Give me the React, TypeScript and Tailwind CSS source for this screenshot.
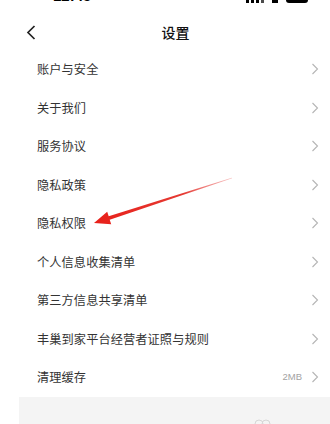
import React from "react";

const rows: { label: string; extra?: string }[] = [
  { label: "账户与安全" },
  { label: "关于我们" },
  { label: "服务协议" },
  { label: "隐私政策" },
  { label: "隐私权限" },
  { label: "个人信息收集清单" },
  { label: "第三方信息共享清单" },
  { label: "丰巢到家平台经营者证照与规则" },
  { label: "清理缓存", extra: "2MB" },
];

function Chevron() {
  return (
    <svg width="8" height="12" viewBox="0 0 8 12" fill="none">
      <path d="M1.5 1L6.5 6L1.5 11" stroke="#b5b5b5" strokeWidth="1.1" />
    </svg>
  );
}

function Arrow() {
  return (
    <svg className="pointer-events-none absolute left-0 top-0" width="330" height="424">
      <defs>
        <linearGradient id="ar" x1="232" y1="178" x2="94" y2="223" gradientUnits="userSpaceOnUse">
          <stop offset="0" stopColor="#f08080" stopOpacity="0.5" />
          <stop offset="0.35" stopColor="#e53a33" />
          <stop offset="1" stopColor="#e8201a" />
        </linearGradient>
      </defs>
      <polygon
        points="94,223 107.2,211.8 108.7,216.3 231.8,177.7 232.2,178.3 109.7,219.7 111.2,224.2"
        fill="url(#ar)"
      />
    </svg>
  );
}

export default function App() {
  return (
    <div
      className="relative h-[424px] w-[330px] overflow-hidden bg-white text-[#333]"
      style={{ fontFamily: '"Noto Sans CJK SC", "Noto Sans", sans-serif' }}
    >
      {/* status bar, cut off at the top of the shot */}
      <div className="flex h-[3px] items-end justify-between overflow-hidden pl-[53px] pr-[22px]">
        <span
          className="text-[15px] font-bold leading-none text-black"
          style={{ fontFamily: '"Liberation Sans", sans-serif' }}
        >
          12:45
        </span>
        <div className="flex items-end gap-[8px]">
          <div className="flex items-end gap-[2px]">
            <div className="h-[6px] w-[3px] bg-black" />
            <div className="h-[8px] w-[3px] bg-black" />
            <div className="h-[10px] w-[3px] bg-black" />
            <div className="h-[12px] w-[3px] bg-black/70" />
          </div>
          <div className="h-[6px] w-[6px] bg-black" />
          <div className="h-[9px] w-[22px] rounded-[3px] bg-black" />
        </div>
      </div>

      {/* nav */}
      <div className="relative mt-[11px] flex h-[36px] items-center justify-center">
        <div className="absolute left-[26px] top-[11px]">
          <svg width="11" height="15" viewBox="0 0 11 15" fill="none">
            <path d="M8.5 1L2 7.5L8.5 14" stroke="#222" strokeWidth="1.7" />
          </svg>
        </div>
        <span className="pl-[21px] text-[14px] font-medium text-[#111]">设置</span>
      </div>

      {/* rows */}
      <div className="flex flex-col">
        {rows.map((r) => (
          <div key={r.label} className="flex h-[38.5px] items-center pl-[37px] pr-[11px]">
            <span className="flex-1 text-[12.2px] tracking-[0.1px] text-[#333]">{r.label}</span>
            {r.extra && (
              <span className="mr-[9px] text-[9.5px] text-[#a3a3a3]" style={{ fontFamily: '"Liberation Sans", sans-serif' }}>
                {r.extra}
              </span>
            )}
            <Chevron />
          </div>
        ))}
      </div>

      {/* bottom block */}
      <div className="ml-[19px] h-[40px] bg-[#f4f4f4]">
        <div className="relative h-full">
          <svg className="absolute left-[235px] top-[21px]" width="18" height="10" viewBox="0 0 18 10" fill="none">
            <circle cx="5" cy="6" r="4" stroke="#d6d6d6" strokeWidth="1" />
            <circle cx="12" cy="6" r="4" stroke="#d6d6d6" strokeWidth="1" />
          </svg>
        </div>
      </div>

      <Arrow />
    </div>
  );
}
